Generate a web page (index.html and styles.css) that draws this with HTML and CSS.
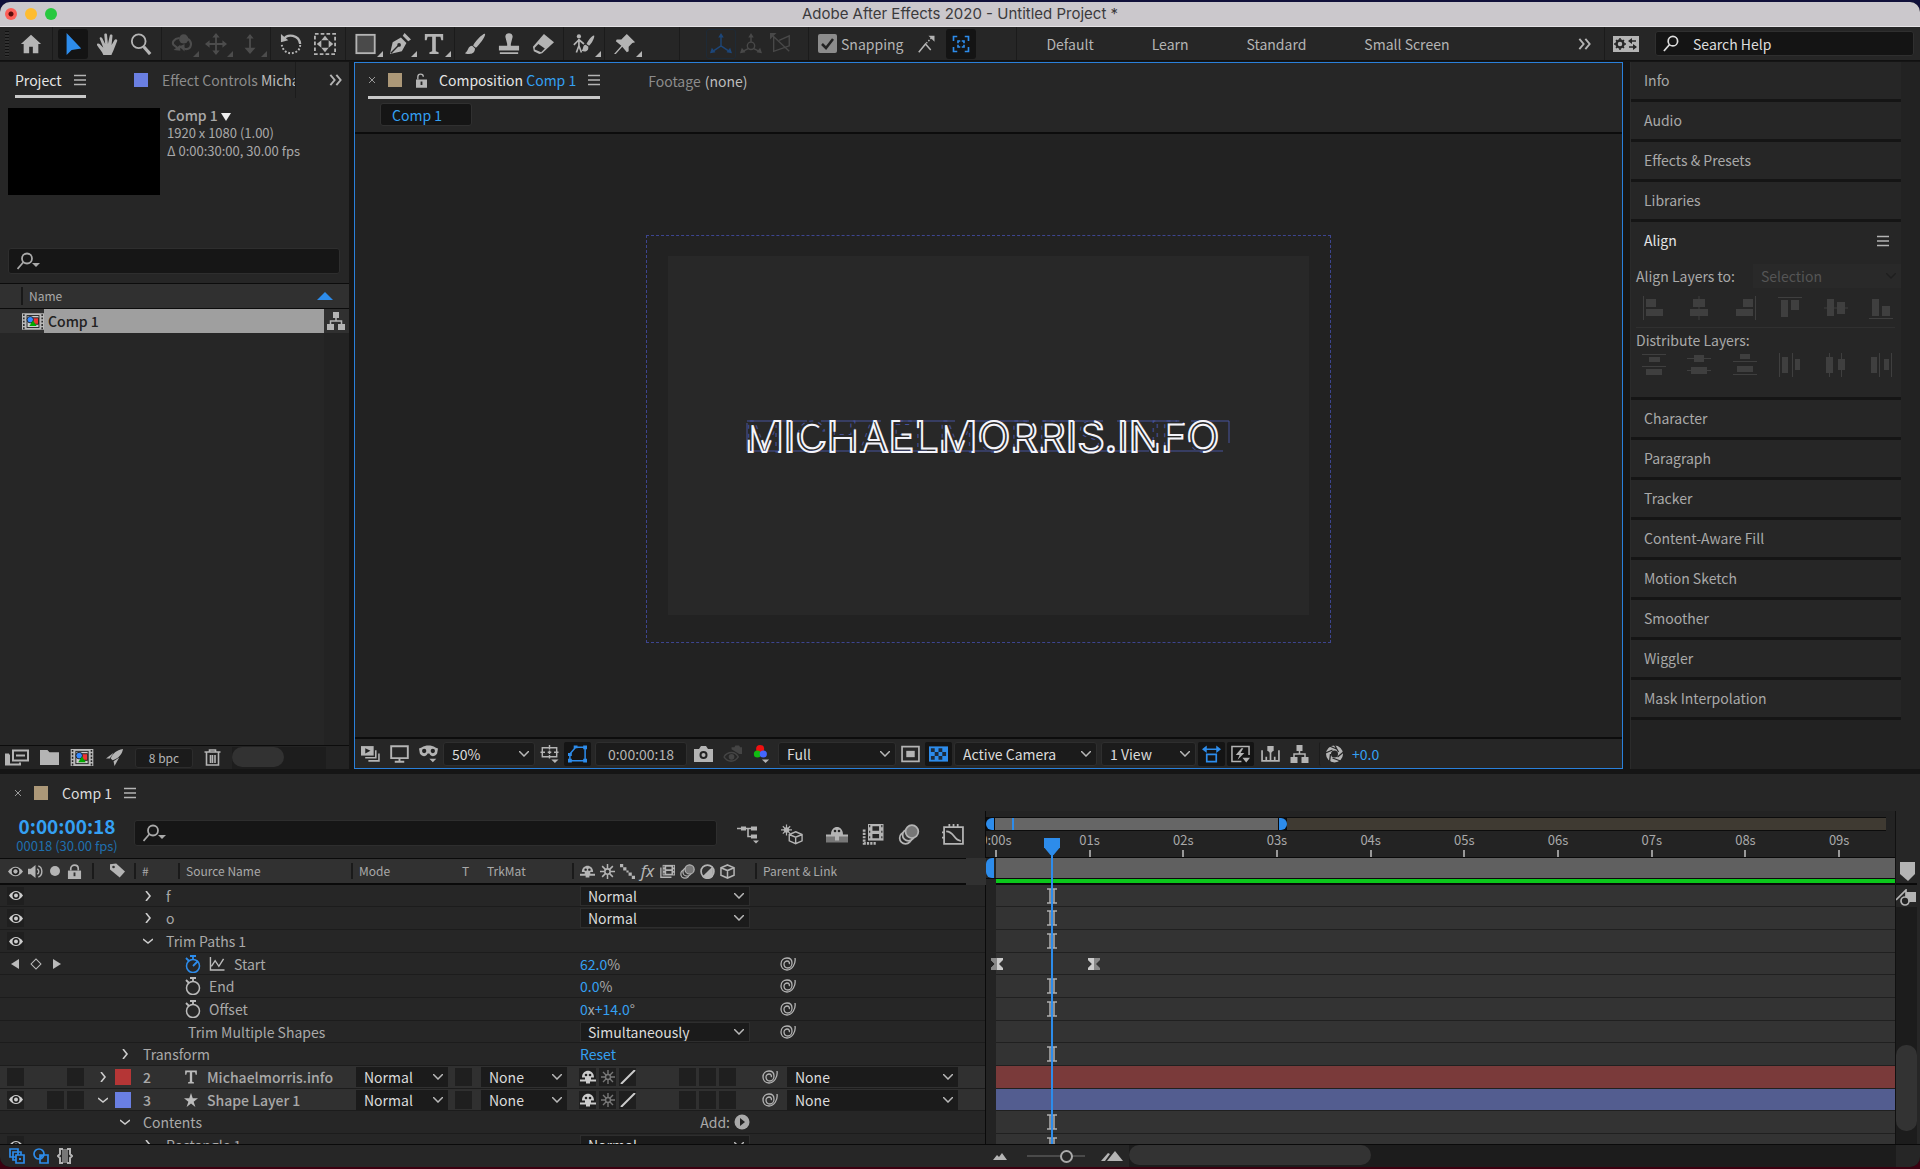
FILE: index.html
```html
<!DOCTYPE html>
<html lang="en">
<head>
<meta charset="utf-8">
<title>Adobe After Effects 2020 - Untitled Project *</title>
<link rel="stylesheet" href="styles.css">
</head>
<body>
<svg class="defs" aria-hidden="true">
  <defs>
    <symbol id="home" viewBox="0 0 24 24"><path fill="currentColor" d="M12 2 1 12h3v10h6v-7h4v7h6V12h3z"/></symbol>
    <symbol id="arrow" viewBox="0 0 24 24"><path fill="currentColor" d="M5 0v24l5.500-5.500L21 17z"/></symbol>
    <symbol id="hand" viewBox="0 0 24 24"><path fill="currentColor" d="M8 24c-1-4-5-7-7-11 0-2 2-2 3-1l4 4L4 6c0-2 2-2 3 0l3 6-1-10c0-2 3-2 3 0l1 10 2-9c0-2 3-2 3 0l-1 10 3-5c1-2 4-1 3 1l-4 10c-1 3-2 3-2 5z"/></symbol>
    <symbol id="mag" viewBox="0 0 24 24"><g fill="none" stroke="currentColor"><circle cx="9.500" cy="9" r="7.500" stroke-width="2"/><path d="m15 15 7 8" stroke-width="3.500"/></g></symbol>
    <symbol id="orbit" viewBox="0 0 26 24"><circle cx="15" cy="6" r="5.500" fill="currentColor"/><path fill="none" stroke="currentColor" stroke-width="2.500" d="M10 5C3 6 1 10 3 13l5 4M20 6c6 4 4 13-3 12l-6-3"/><path fill="currentColor" d="m3 19 8-6v7zM16 12v9l-6-6z"/></symbol>
    <symbol id="pan" viewBox="0 0 24 24"><path fill="currentColor" d="m12 0 4 5h-3v6h6V8l5 4-5 4v-3h-6v6h3l-4 5-4-5h3v-6H5v3l-5-4 5-4v3h6V5H8z"/></symbol>
    <symbol id="dolly" viewBox="0 0 24 24"><path fill="currentColor" d="m12 1 4 5h-3v10h5l-6 7-6-7h5V6H8z"/></symbol>
    <symbol id="rotate" viewBox="0 0 24 24"><path fill="none" stroke="currentColor" stroke-width="2.500" d="M4 7c4-7 17-5 18 5"/><path fill="currentColor" d="M1 1v9l8-2z"/><path fill="none" stroke="currentColor" stroke-width="2.200" stroke-dasharray="2 2" d="M22 13c0 6-5 9-10 9s-9-3-10-9"/></symbol>
    <symbol id="anchor" viewBox="0 0 24 24"><rect x="1" y="1" width="22" height="22" fill="none" stroke="currentColor" stroke-width="2" stroke-dasharray="4 2.300"/><path fill="currentColor" d="m12 3 4 5H8zm0 18 4-5H8zM3 12l5-4v8zm18 0-5-4v8z"/></symbol>
    <symbol id="rectangle" viewBox="0 0 24 24"><rect x="1.500" y="2" width="20" height="20" fill="#4a4a4a" stroke="currentColor" stroke-width="2"/></symbol>
    <symbol id="pen" viewBox="0 0 24 24"><path fill="currentColor" d="m1 23 3-13 9-5 6 6-5 9zM15 3l2-3 7 7-3 2z"/><path stroke="#262626" stroke-width="1.500" d="m2 22 8-8"/><circle cx="11" cy="13" r="2" fill="#262626"/></symbol>
    <symbol id="type" viewBox="0 0 24 24"><path fill="currentColor" d="M2 1h20v7h-2l-1-4h-5v16l3 1v2H7v-2l3-1V4H5L4 8H2z"/></symbol>
    <symbol id="brush" viewBox="0 0 24 24"><path fill="currentColor" d="M23 1c-2-1-12 9-13 13l3 2C16 14 24 3 23 1zM9 14c-5 0-4 6-8 8 5 2 11 1 11-5z"/></symbol>
    <symbol id="stamp" viewBox="0 0 24 24"><path fill="currentColor" d="M10 12 8 4c0-5 8-5 8 0l-2 8v2h9v5H1v-5h9zM2 21h20v2H2z"/></symbol>
    <symbol id="eraser" viewBox="0 0 24 24"><path fill="currentColor" d="M13 1 1 15l1 5 6 3 3-1L24 10z"/><path fill="#262626" d="m7 12 7 5-4 4-7-3v-2z"/></symbol>
    <symbol id="roto" viewBox="0 0 26 24"><circle cx="7" cy="3" r="2.500" fill="currentColor"/><path fill="none" stroke="currentColor" stroke-width="2" d="M7 6v8l-3 8M7 14l3 8M7 7l-6 6M7 7l6 5"/><path fill="currentColor" d="M25 2c-2-1-8 7-9 10l3 2c3-2 7-10 6-12zM15 13c-4 0-2 5-5 7 4 2 9 1 8-5z"/></symbol>
    <symbol id="pin" viewBox="0 0 24 24"><path fill="currentColor" d="m14 1 9 9-3 1-4 4v5l-2 1-5-6-7 8-2 0 8-9-6-5 1-2h5l4-4z"/></symbol>
    <symbol id="axis" viewBox="0 0 24 24"><path fill="none" stroke="currentColor" stroke-width="1.500" d="M12 3v11M12 14 3 20M12 14l9 6"/><path fill="currentColor" d="m12 0 3 5H9zM0 22l2-6 4 5zm24 0-2-6-4 5z"/></symbol>
    <symbol id="axisworld" viewBox="0 0 24 24"><circle cx="12" cy="14" r="4" fill="none" stroke="currentColor" stroke-width="1.500"/><path fill="none" stroke="currentColor" stroke-width="1.500" d="M12 3v7M9 17l-6 3M15 17l6 3"/><path fill="currentColor" d="m12 0 3 5H9zM0 22l2-6 4 5zm24 0-2-6-4 5z"/></symbol>
    <symbol id="axisview" viewBox="0 0 24 24"><path fill="none" stroke="currentColor" stroke-width="1.500" d="M4 4v16L21 14V3L10 8M3 3l18 17"/><path fill="currentColor" d="M0 0h7L0 7z"/></symbol>
    <symbol id="snapline" viewBox="0 0 24 24"><path fill="none" stroke="currentColor" stroke-width="2" d="m1 23 9-11 7 8"/><path fill="none" stroke="currentColor" stroke-width="2" stroke-dasharray="2 2" d="m11 11 7-7"/><path fill="currentColor" d="M14 1h8v8z"/></symbol>
    <symbol id="snapbox" viewBox="0 0 24 24"><g fill="none" stroke="currentColor" stroke-width="2.200"><path d="M2 8V2h5M17 2h5v6M22 16v6h-5M7 22H2v-6M8 11V8h3M13 8h3v3M16 13v3h-3M11 16H8v-3"/></g></symbol>
    <symbol id="chevrons" viewBox="0 0 16 14"><path fill="none" stroke="currentColor" stroke-width="2.200" d="m2 1 5 6-5 6M9 1l5 6-5 6"/></symbol>
    <symbol id="workspace" viewBox="0 0 26 16"><path fill="currentColor" d="M0 0h26v16H0z"/><circle cx="7" cy="8" r="3.500" fill="none" stroke="#262626" stroke-width="2.500"/><path stroke="#262626" stroke-width="1.500" d="M7 2v3M7 11v3M1 8h3M10 8h3M3 4l2 2M9 10l2 2M3 12l2-2M9 6l2-2M16 5h7M16 11h7"/><path fill="#262626" d="m15 5 4-3v6zM24 11l-4-3v6z"/></symbol>
    <symbol id="menu" viewBox="0 0 12 12"><path stroke="currentColor" stroke-width="1.500" d="M0 1.500h12M0 6h12M0 10.500h12"/></symbol>
    <symbol id="lens" viewBox="0 0 16 18"><g fill="none" stroke="currentColor" stroke-width="1.800"><circle cx="10" cy="6.500" r="5"/><path d="m6.500 10-6 7"/></g></symbol>
    <symbol id="lensdrop" viewBox="0 0 24 18"><g fill="none" stroke="currentColor" stroke-width="1.800"><circle cx="10" cy="6.500" r="5"/><path d="m6.500 10-6 7"/></g><path fill="currentColor" d="M15 11h8l-4 4z"/></symbol>
    <symbol id="unlock" viewBox="0 0 12 16"><path fill="none" stroke="currentColor" stroke-width="1.500" d="M2 7V4c0-4 6-4 6 0"/><path fill="currentColor" d="M0 7h12v9H0z"/><path fill="#262626" d="M5 9h2v4H5z"/></symbol>
    <symbol id="lock" viewBox="0 0 14 16"><path fill="none" stroke="currentColor" stroke-width="1.800" d="M3 7V5c0-5 8-5 8 0v2"/><path fill="currentColor" d="M0 7h14v9H0z"/><path fill="#333" d="M6 9h2v4H6z"/></symbol>
    <symbol id="compicon" viewBox="0 0 24 18"><path fill="#b9b9b9" d="M0 0h24v18H0z"/><path fill="#222" d="M5 2h14v14H5z"/><path fill="#ccc" d="M6 3h12v12H6z"/><path fill="#e33" stroke="#222" d="M11 5h7v7h-7z"/><circle cx="9" cy="7" r="3.500" fill="#38f" stroke="#222"/><path fill="#0a0" d="m12 8 4 6H8z"/><path stroke="#222" stroke-width="1.600" stroke-dasharray="2 1.600" d="M2 1v17M22 1v17"/></symbol>
    <symbol id="flow" viewBox="0 0 18 18"><path fill="currentColor" d="M6 0h6v6H6zM0 12h7v6H0zM11 12h7v6h-7z"/><path fill="none" stroke="currentColor" stroke-width="1.500" d="M9 6v3M3.500 12V9h11v3"/></symbol>
    <symbol id="interpret" viewBox="0 0 24 16"><path fill="none" stroke="currentColor" stroke-width="2" d="M8 1h15v10H8zM11 6h9M4 5H1v10h14v-2"/><path fill="currentColor" d="M2 5h3v10H2z"/></symbol>
    <symbol id="folder" viewBox="0 0 18 14"><path fill="currentColor" d="M0 0h7l2 2h9v12H0z"/></symbol>
    <symbol id="rocket" viewBox="0 0 18 18"><path fill="currentColor" d="M18 0C11 1 7 5 5 10l2 2c6-2 10-6 11-12zM8 4 0 10l4 0zM14 9l-5 9-1-5z"/></symbol>
    <symbol id="trash" viewBox="0 0 16 17"><path fill="none" stroke="currentColor" stroke-width="1.600" d="M0 3h16M5 3V1h6v2M2 3v13h12V3M6 6v8M8 6v8M10.500 6v8"/></symbol>
    <symbol id="preview" viewBox="0 0 18 15"><path fill="currentColor" d="M0 0h12v9H0z"/><path fill="#222" d="m4 2 5 2.500L4 7z"/><path fill="none" stroke="currentColor" stroke-width="1.500" d="M14 4v7H4M17 7v7H7"/></symbol>
    <symbol id="monitor" viewBox="0 0 16 15"><path fill="none" stroke="currentColor" stroke-width="1.600" d="M1 1h14v10H1zM8 11v3M4 14h8"/></symbol>
    <symbol id="goggles" viewBox="0 0 22 19"><path fill="currentColor" d="M3 2c5-3 11-3 16 0l3 1-1 6c-3 4-7 4-9 0h-2c-2 4-6 4-9 0L0 3zM12 15h8l-4 4z"/><circle cx="6" cy="6" r="2.500" fill="#222"/><circle cx="16" cy="6" r="2.500" fill="#222"/></symbol>
    <symbol id="grid" viewBox="0 0 20 20"><path fill="none" stroke="currentColor" stroke-width="1.600" d="M2 3h16v10H2zM10 0v5M10 11v4M0 8h5M15 8h5M8 8h4M10 6v4"/><path fill="currentColor" d="M12 16h8l-4 4z"/></symbol>
    <symbol id="mask" viewBox="0 0 20 18"><path fill="none" stroke="currentColor" stroke-width="1.600" d="M2 16V9l6-7h10v14z"/><path fill="currentColor" d="M0 14h4v4H0zM16 14h4v4h-4zM16 0h4v4h-4zM6 0h4v3H6zM0 8h4v3H0z"/></symbol>
    <symbol id="camera" viewBox="0 0 19 16"><path fill="currentColor" d="M0 3h5l2-3h5l2 3h5v13H0z"/><circle cx="9.500" cy="9" r="4" fill="#222"/><circle cx="9.500" cy="9" r="2" fill="currentColor"/></symbol>
    <symbol id="showsnap" viewBox="0 0 20 18"><path fill="none" stroke="currentColor" stroke-width="1.600" d="M1 12c4-6 12-6 15 0-4 6-11 6-15 0"/><circle cx="9" cy="12" r="3" fill="currentColor"/><path fill="currentColor" d="M9 4V2h3l1-2h4l1 2h2v7h-3z"/></symbol>
    <symbol id="rgb" viewBox="0 0 17 20"><circle cx="7" cy="4.500" r="4.500" fill="#f01010"/><circle cx="4" cy="10" r="4" fill="#1b1"/><circle cx="10.500" cy="10" r="4" fill="#46f"/><path fill="currentColor" d="M9 16h8l-4 4z"/></symbol>
    <symbol id="roi" viewBox="0 0 18 16"><path fill="none" stroke="currentColor" stroke-width="1.600" d="M1 1h16v14H1z"/><path fill="currentColor" d="M5 5h8v6H5z"/></symbol>
    <symbol id="checker" viewBox="0 0 20 16"><path fill="currentColor" d="M0 0h20v16H0z"/><path fill="#1c2b3c" d="M2 2h4v4H2zM10 2h4v4h-4zM6 6h4v4H6zM14 6h4v4h-4zM2 10h4v4H2zM10 10h4v4h-4z"/></symbol>
    <symbol id="pixelaspect" viewBox="0 0 20 18"><path fill="none" stroke="currentColor" stroke-width="1.800" d="M5 9.500h10V17H5zM2 4h16"/><path fill="currentColor" d="m0 4 5-4v8zM20 4l-5-4v8z"/></symbol>
    <symbol id="fast" viewBox="0 0 20 18"><path fill="none" stroke="currentColor" stroke-width="1.600" d="M19 10V1H1v16h10"/><path fill="currentColor" d="m11 3-6 7h4l-2 5 7-7h-4l3-5zM12 13h8l-4 5z"/></symbol>
    <symbol id="tlbtn" viewBox="0 0 18 15"><path fill="none" stroke="currentColor" stroke-width="1.600" d="M1 4v10h16V4M5 10v4M9 6v8M13 10v4"/><path fill="currentColor" d="M6 0h6v4l-3 3-3-3z"/></symbol>
    <symbol id="aperture" viewBox="0 0 18 18"><circle cx="9" cy="9" r="6" fill="none" stroke="currentColor" stroke-width="5"/><path fill="none" stroke="#262626" stroke-width="1.300" d="m9 0 4 7M18 7l-6 5M15 16l-8-3M4 17l1-8M0 8l7-3M4 1l7 3"/></symbol>
    <symbol id="eye" viewBox="0 0 14 10"><path fill="currentColor" d="M0 5c4-6 10-6 14 0-4 6-10 6-14 0z"/><circle cx="7" cy="5" r="3.500" fill="#1c1c1c"/><circle cx="7" cy="5" r="2" fill="currentColor"/></symbol>
    <symbol id="speaker" viewBox="0 0 16 14"><path fill="currentColor" d="M0 4h3l5-4v14l-5-4H0z"/><path fill="none" stroke="currentColor" stroke-width="1.500" d="M10 4c2 2 2 4 0 6M11 1c5 2 5 10 0 12"/></symbol>
    <symbol id="tag" viewBox="0 0 17 16"><path fill="currentColor" d="M0 1 7 0l10 9-6 7L0 7z"/><circle cx="4" cy="4" r="1.500" fill="#333"/></symbol>
    <symbol id="shy" viewBox="0 0 16 13"><path fill="currentColor" d="M2 7c0-9 12-9 12 0h-3v2h5v2h-6v2H6v-2H0V9h5V7z"/><circle cx="6" cy="4.500" r="1.300" fill="#222"/><circle cx="10" cy="4.500" r="1.300" fill="#222"/></symbol>
    <symbol id="sun" viewBox="0 0 14 14"><circle cx="7" cy="7" r="2.500" fill="none" stroke="currentColor" stroke-width="1.500"/><path stroke="currentColor" stroke-width="1.400" d="M7 0v4M7 10v4M0 7h4M10 7h4M2 2l3 3M9 9l3 3M12 2 9 5M5 9l-3 3"/></symbol>
    <symbol id="dots" viewBox="0 0 14 14"><path fill="currentColor" d="M0 0h3v3H0zM3 3h3v3H3zM6 6h2v2H6zM8 8h3v3H8zM11 11h3v3h-3z"/></symbol>
    <symbol id="slash" viewBox="0 0 14 14"><path fill="none" stroke="currentColor" stroke-width="2" d="M0 14 14 0"/></symbol>
    <symbol id="film" viewBox="0 0 17 15"><path fill="none" stroke="currentColor" stroke-width="1.500" d="M1 3v11h12"/><path fill="currentColor" d="M3 0h14v12H3z"/><path fill="#333" d="M7 2h6v3H7zM7 7h6v3H7zM4 1h1v2H4zM4 5h1v2H4zM4 9h1v2H4zM15 1h1v2h-1zM15 5h1v2h-1zM15 9h1v2h-1z"/></symbol>
    <symbol id="blur" viewBox="0 0 18 18"><g fill="none" stroke="currentColor" stroke-width="1.500"><circle cx="6" cy="12" r="5"/><circle cx="8.500" cy="9.500" r="5" fill="#333"/><circle cx="11.500" cy="6.500" r="5.500" fill="#777"/></g></symbol>
    <symbol id="adjust" viewBox="0 0 14 14"><circle cx="7" cy="7" r="6" fill="none" stroke="currentColor" stroke-width="1.600"/><path fill="currentColor" d="M12 2v10A7 7 0 0 1 2 12z"/></symbol>
    <symbol id="cube" viewBox="0 0 16 16"><path fill="none" stroke="currentColor" stroke-width="1.600" d="m8 1 7 3v8l-7 3-7-3V4zM1 4l7 3 7-3M8 7v8"/></symbol>
    <symbol id="flowchart" viewBox="0 0 22 18"><path fill="none" stroke="currentColor" stroke-width="1.600" d="M0 3h20M11 3v8h8"/><path fill="currentColor" d="M4 1h5v4H4zM14 1h6v4h-6zM14 9h6v4h-6zM16 15h6l-3 3z"/></symbol>
    <symbol id="draft" viewBox="0 0 24 22"><path fill="none" stroke="currentColor" stroke-width="1.500" d="m16 8 7 3v7l-7 3-7-3v-7zM9 11l7 3 7-3M16 14v7"/><path stroke="currentColor" stroke-width="1.300" d="M6 0v12M0 6h12M2 2l8 8M10 2l-8 8"/><circle cx="6" cy="6" r="3" fill="currentColor"/></symbol>
    <symbol id="shyall" viewBox="0 0 22 16"><path fill="#777" d="M0 9h22v7H0z"/><path fill="currentColor" d="M5 8c0-10 12-10 12 0h5v2h-9v4H9v-4H0V8z"/><circle cx="9" cy="4.500" r="1.300" fill="#262626"/><circle cx="13" cy="4.500" r="1.300" fill="#262626"/></symbol>
    <symbol id="films" viewBox="0 0 19 19"><path fill="none" stroke="currentColor" stroke-width="2.500" stroke-dasharray="2 1" d="M1.500 5v12.500H13"/><path fill="currentColor" d="M5 0h14v15H5z"/><path fill="#262626" d="M9 2h6v4H9zM9 9h6v4H9zM6 1h1v2H6zM6 6h1v2H6zM6 11h1v2H6zM17 1h1v2h-1zM17 6h1v2h-1zM17 11h1v2h-1z"/></symbol>
    <symbol id="graph" viewBox="0 0 21 20"><path fill="none" stroke="currentColor" stroke-width="1.700" d="M2 3h18v16H2zM4 7c8 0 7 9 14 9M7 0v3M11 0v3M15 0v3M0 8h2M0 13h2"/></symbol>
    <symbol id="twirl" viewBox="0 0 10 10"><path fill="none" stroke="currentColor" stroke-width="1.600" d="m3 0 4 5-4 5"/></symbol>
    <symbol id="twirldown" viewBox="0 0 10 10"><path fill="none" stroke="currentColor" stroke-width="1.600" d="m0 3 5 4 5-4"/></symbol>
    <symbol id="watch" viewBox="0 0 16 18"><circle cx="8" cy="11" r="6.500" fill="none" stroke="currentColor" stroke-width="1.500"/><path fill="none" stroke="currentColor" stroke-width="1.800" d="M5 1h6M8 1v3M1 3l3 3"/></symbol>
    <symbol id="watchon" viewBox="0 0 16 18"><circle cx="8" cy="11" r="6.500" fill="none" stroke="currentColor" stroke-width="1.500"/><path fill="none" stroke="currentColor" stroke-width="1.800" d="M5 1h6M8 1v3M1 3l3 3M8 11l5-5"/></symbol>
    <symbol id="curve" viewBox="0 0 16 16"><path fill="none" stroke="currentColor" stroke-width="1.500" d="M1 1v14h15M2 11l4-6 4 6 5-8"/></symbol>
    <symbol id="star" viewBox="0 0 16 16"><path fill="currentColor" d="m8 0 2 6h6l-5 4 2 6-5-4-5 4 2-6-5-4h6z"/></symbol>
    <symbol id="whip" viewBox="0 0 16 14"><path fill="none" stroke="currentColor" stroke-width="1.300" d="M15 1c1 6-3 12-8 12C3 13 1 10 1 7c0-4 3-6 6-6 4 0 5 3 5 5 0 3-2 5-4 5-3 0-4-2-4-4s2-3 3-3c2 0 3 2 2 3"/></symbol>
    <symbol id="ibeam" viewBox="0 0 10 16"><path fill="none" stroke="#b0b0b0" stroke-width="1.500" d="M0 1h10M0 15h10M3 1v14M7 1v14"/></symbol>
    <symbol id="keyl" viewBox="0 0 12 12"><path fill="#ccc" d="M0 0h12v2L8 6l4 4v2H0v-2l4-4-4-4z"/><path fill="#888" d="M0 0h6v12H0v-2l4-4-4-4z"/></symbol>
    <symbol id="keyr" viewBox="0 0 12 12"><path fill="#888" d="M0 0h12v2L8 6l4 4v2H0v-2l4-4-4-4z"/><path fill="#ccc" d="M0 0h6v12H0v-2l4-4-4-4z"/></symbol>
    <symbol id="add" viewBox="0 0 16 16"><circle cx="8" cy="8" r="7.500" fill="currentColor"/><path fill="#222" d="m6 4 5 4-5 4z"/></symbol>
    <symbol id="sw1" viewBox="0 0 16 16"><path fill="none" stroke="currentColor" stroke-width="1.700" d="M1 1h8v8H1zM4 4h8v8H4z"/><path fill="#262626" stroke="currentColor" stroke-width="1.700" d="M7 7h8v8H7z"/><path fill="currentColor" d="M10 10h2v2h-2z"/></symbol>
    <symbol id="sw2" viewBox="0 0 16 16"><circle cx="6" cy="6" r="5" fill="none" stroke="currentColor" stroke-width="1.700"/><path fill="none" stroke="currentColor" stroke-width="1.700" d="M7 7h8v8H7z"/><path fill="currentColor" d="M7 7h4l-4 4z"/></symbol>
    <symbol id="sw3" viewBox="0 0 16 16"><path fill="#777" d="M5 1h6v14H5z"/><path fill="none" stroke="currentColor" stroke-width="2" d="M6 1H3v5L1 8l2 2v5h3M10 1h3v5l2 2-2 2v5h-3"/></symbol>
    <symbol id="hillS" viewBox="0 0 14 7"><path fill="currentColor" d="m0 7 4-5 2 2 3-4 5 7z"/></symbol>
    <symbol id="hillL" viewBox="0 0 22 10"><path fill="currentColor" d="m0 10 7-8 2 1-5 7zM6 10l8-10 8 10z"/></symbol>
    <symbol id="marker" viewBox="0 0 15 19"><path fill="currentColor" d="M0 0h15v12l-7 7-8-7z"/></symbol>
    <symbol id="compbtn" viewBox="0 0 20 17"><path fill="currentColor" d="M10 3h10v10H10z"/><path fill="none" stroke="currentColor" stroke-width="1.700" d="m0 11 10-10v8"/><circle cx="9" cy="12" r="4" fill="#222" stroke="currentColor" stroke-width="1.700"/></symbol>
    <symbol id="al1" viewBox="0 0 24 24"><path fill="currentColor" d="M1 0h1v24H1zM4 3h10v8H4zM4 13h17v7H4z"/></symbol>
    <symbol id="al2" viewBox="0 0 24 24"><path fill="currentColor" d="M11.500 0h1v24h-1zM6 3h12v8H6zM3 13h18v7H3z"/></symbol>
    <symbol id="al3" viewBox="0 0 24 24"><path fill="currentColor" d="M22 0h1v24h-1zM10 3h10v8H10zM3 13h17v7H3z"/></symbol>
    <symbol id="al4" viewBox="0 0 24 24"><path fill="currentColor" d="M0 1h24v1H0zM3 4h7v17H3zM13 4h8v10h-8z"/></symbol>
    <symbol id="al5" viewBox="0 0 24 24"><path fill="currentColor" d="M0 11.500h24v1H0zM3 3h7v17H3zM13 6h8v12h-8z"/></symbol>
    <symbol id="al6" viewBox="0 0 24 24"><path fill="currentColor" d="M0 22h24v1H0zM3 3h7v17H3zM13 10h8v10h-8z"/></symbol>
    <symbol id="di1" viewBox="0 0 24 24"><path fill="currentColor" d="M0 1h24v1H0zM7 4h11v5H7zM0 13h24v1H0zM4 16h16v6H4z"/></symbol>
    <symbol id="di2" viewBox="0 0 24 24"><path fill="currentColor" d="M0 5h24v1H0zM7 2h10v7H7zM0 17h24v1H0zM4 14h16v7H4z"/></symbol>
    <symbol id="di3" viewBox="0 0 24 24"><path fill="currentColor" d="M0 8h24v1H0zM7 1h10v5H7zM0 21h24v1H0zM4 13h16v6H4z"/></symbol>
    <symbol id="di4" viewBox="0 0 24 24"><path fill="currentColor" d="M1 0h1v24H1zM4 4h6v16H4zM14 0h1v24h-1zM17 6h5v11h-5z"/></symbol>
    <symbol id="di5" viewBox="0 0 24 24"><path fill="currentColor" d="M5 0h1v24H5zM2 4h7v16H2zM17 0h1v24h-1zM14 6h7v11h-7z"/></symbol>
    <symbol id="di6" viewBox="0 0 24 24"><path fill="currentColor" d="M2 4h6v16H2zM10 0h1v24h-1zM15 6h5v11h-5zM22 0h1v24h-1z"/></symbol>
  </defs>
</svg>

<div class="window">
  <header class="titlebar">
    <span class="light red"></span><span class="light yellow"></span><span class="light green"></span>
    <h1>Adobe After Effects 2020 - Untitled Project *</h1>
  </header>

  <nav class="toolbar" aria-label="Tools">
    <div class="group first"><span class="grip"></span><button class="tool" aria-label="Home"><svg><use href="#home"/></svg></button></div>
    <div class="group"><button class="tool on" aria-label="Selection"><svg><use href="#arrow"/></svg></button><button class="tool" aria-label="Hand"><svg><use href="#hand"/></svg></button><button class="tool" aria-label="Zoom"><svg><use href="#mag"/></svg></button></div>
    <div class="group dim"><button class="tool more" aria-label="Orbit"><svg><use href="#orbit"/></svg></button><button class="tool more" aria-label="Pan camera"><svg><use href="#pan"/></svg></button><button class="tool more" aria-label="Dolly"><svg><use href="#dolly"/></svg></button></div>
    <div class="group"><button class="tool" aria-label="Rotation"><svg><use href="#rotate"/></svg></button><button class="tool" aria-label="Anchor point"><svg><use href="#anchor"/></svg></button></div>
    <div class="group"><button class="tool more" aria-label="Rectangle"><svg><use href="#rectangle"/></svg></button><button class="tool more" aria-label="Pen"><svg><use href="#pen"/></svg></button><button class="tool more" aria-label="Type"><svg><use href="#type"/></svg></button></div>
    <div class="group"><button class="tool" aria-label="Brush"><svg><use href="#brush"/></svg></button><button class="tool" aria-label="Clone stamp"><svg><use href="#stamp"/></svg></button><button class="tool" aria-label="Eraser"><svg><use href="#eraser"/></svg></button></div>
    <div class="group"><button class="tool more" aria-label="Roto brush"><svg><use href="#roto"/></svg></button></div>
    <div class="group pins"><button class="tool more" aria-label="Puppet pin"><svg><use href="#pin"/></svg></button></div>
    <div class="group axes"><button class="tool framed" aria-label="Local axis"><svg><use href="#axis"/></svg></button><button class="tool" aria-label="World axis"><svg><use href="#axisworld"/></svg></button><button class="tool" aria-label="View axis"><svg><use href="#axisview"/></svg></button></div>
    <div class="group snaps">
      <label class="snap"><input type="checkbox" checked>Snapping</label>
      <button class="tool" aria-label="Snap beyond edges"><svg><use href="#snapline"/></svg></button><button class="tool on" aria-label="Snap to features"><svg><use href="#snapbox"/></svg></button>
    </div>
    <div class="group spaces"><button>Default</button><button>Learn</button><button>Standard</button><button>Small Screen</button></div>
    <button class="overflow" aria-label="More workspaces"><svg class="i16"><use href="#chevrons"/></svg></button>
    <div class="group help">
      <button aria-label="Workspace settings"><svg class="wsicon"><use href="#workspace"/></svg></button>
      <label class="helpbox"><svg class="lens"><use href="#lens"/></svg><input type="text" aria-label="Search Help" value="Search Help"></label>
    </div>
  </nav>

  <main class="upper">
    <section class="project">
      <div class="tabs">
        <button class="tab active">Project <svg class="menu"><use href="#menu"/></svg></button>
        <button class="tab fx"><i class="swatch blue"></i><span class="clip">Effect Controls <b>Michaelmorris.info</b></span></button>
        <button class="overflow" aria-label="More panels"><svg class="i16"><use href="#chevrons"/></svg></button>
      </div>
      <div class="meta">
        <div class="thumb"></div>
        <div class="facts"><strong>Comp 1<i class="tri"></i></strong><span>1920 x 1080 (1.00)</span><span>Δ 0:00:30:00, 30.00 fps</span></div>
      </div>
      <label class="searchbox"><svg class="lensdrop"><use href="#lensdrop"/></svg><input type="text" aria-label="Search project"></label>
      <div class="colhead"><span>Name</span><i class="sort"></i></div>
      <div class="item"><svg class="compicon"><use href="#compicon"/></svg><span class="itemname">Comp 1</span><svg class="flow"><use href="#flow"/></svg></div>
      <div class="projbody"><div></div></div>
      <div class="projfoot">
        <button aria-label="Interpret footage"><svg class="w24"><use href="#interpret"/></svg></button>
        <button aria-label="New folder"><svg class="w20"><use href="#folder"/></svg></button>
        <button aria-label="New composition"><svg class="w24"><use href="#compicon"/></svg></button>
        <button aria-label="Project settings"><svg class="w20"><use href="#rocket"/></svg></button>
        <button class="bpc">8 bpc</button>
        <button aria-label="Delete"><svg class="w18"><use href="#trash"/></svg></button>
        <div class="hscroll"><i></i></div>
      </div>
    </section>

    <section class="comp">
      <div class="comptabs">
        <button class="tab active"><svg class="x" viewBox="0 0 8 8"><path d="m1 1 6 6M7 1 1 7"/></svg><i class="swatch tan"></i><svg class="unlock"><use href="#unlock"/></svg><span>Composition <em>Comp 1</em></span><svg class="menu"><use href="#menu"/></svg></button>
        <button class="tab footage">Footage <b>(none)</b></button>
      </div>
      <div class="crumbs"><button>Comp 1</button></div>
      <div class="viewer">
        <div class="bounds"><div class="canvas">
          <svg class="logo" viewBox="0 0 486 34">
            <rect x="2" y="2" width="482" height="30" class="logobox"/>
            <text x="0" y="33" class="ghost">MICHAELMORRIS.INFO</text>
            <text x="0" y="33" class="stroke">MICHAELMORRIS.INFO</text>
          </svg>
        </div></div>
      </div>
      <div class="viewbar">
        <button class="vi" aria-label="Always preview"><svg><use href="#preview"/></svg></button>
        <button class="vi" aria-label="Primary viewer"><svg><use href="#monitor"/></svg></button>
        <button class="vi" aria-label="VR"><svg><use href="#goggles"/></svg></button>
        <select class="zoomsel" aria-label="Magnification"><option>50%</option></select>
        <button class="vi" aria-label="Grid and guides"><svg><use href="#grid"/></svg></button>
        <button class="vi on" aria-label="Mask visibility"><svg><use href="#mask"/></svg></button>
        <button class="time">0:00:00:18</button>
        <button class="vi" aria-label="Snapshot"><svg><use href="#camera"/></svg></button>
        <button class="vi off" aria-label="Show snapshot"><svg><use href="#showsnap"/></svg></button>
        <button class="vi" aria-label="Channels"><svg><use href="#rgb"/></svg></button>
        <select class="ressel" aria-label="Resolution"><option>Full</option></select>
        <button class="vi" aria-label="Region of interest"><svg><use href="#roi"/></svg></button>
        <button class="vi on" aria-label="Transparency grid"><svg><use href="#checker"/></svg></button>
        <select class="camsel" aria-label="3D view"><option>Active Camera</option></select>
        <select class="viewsel" aria-label="View layout"><option>1 View</option></select>
        <button class="vi on" aria-label="Pixel aspect"><svg><use href="#pixelaspect"/></svg></button>
        <button class="vi dark" aria-label="Fast previews"><svg><use href="#fast"/></svg></button>
        <button class="vi" aria-label="Timeline"><svg><use href="#tlbtn"/></svg></button>
        <button class="vi" aria-label="Flowchart"><svg><use href="#flow"/></svg></button>
        <button class="vi sep" aria-label="Exposure"><svg><use href="#aperture"/></svg></button>
        <a href="#" class="expo">+0.0</a>
      </div>
    </section>

    <aside class="side">
      <button class="panel">Info</button>
      <button class="panel">Audio</button>
      <button class="panel">Effects &amp; Presets</button>
      <button class="panel">Libraries</button>
      <section class="align">
        <div class="panel head"><span>Align</span><svg class="menu"><use href="#menu"/></svg></div>
        <div class="alignto"><label for="alignto">Align Layers to:</label><select id="alignto" disabled><option>Selection</option></select></div>
        <div class="aicons">
          <button aria-label="Align left"><svg><use href="#al1"/></svg></button><button aria-label="Align center"><svg><use href="#al2"/></svg></button><button aria-label="Align right"><svg><use href="#al3"/></svg></button><button aria-label="Align top"><svg><use href="#al4"/></svg></button><button aria-label="Align middle"><svg><use href="#al5"/></svg></button><button aria-label="Align bottom"><svg><use href="#al6"/></svg></button>
        </div>
        <div class="dist">Distribute Layers:</div>
        <div class="aicons">
          <button aria-label="Distribute top"><svg><use href="#di1"/></svg></button><button aria-label="Distribute middle"><svg><use href="#di2"/></svg></button><button aria-label="Distribute bottom"><svg><use href="#di3"/></svg></button><button aria-label="Distribute left"><svg><use href="#di4"/></svg></button><button aria-label="Distribute center"><svg><use href="#di5"/></svg></button><button aria-label="Distribute right"><svg><use href="#di6"/></svg></button>
        </div>
      </section>
      <button class="panel">Character</button>
      <button class="panel">Paragraph</button>
      <button class="panel">Tracker</button>
      <button class="panel">Content-Aware Fill</button>
      <button class="panel">Motion Sketch</button>
      <button class="panel">Smoother</button>
      <button class="panel">Wiggler</button>
      <button class="panel">Mask Interpolation</button>
    </aside>
  </main>

  <section class="timeline">
    <div class="tltab"><svg class="x" viewBox="0 0 8 8"><path d="m1 1 6 6M7 1 1 7"/></svg><i class="swatch tan"></i><span>Comp 1</span><svg class="menu"><use href="#menu"/></svg></div>
    <div class="tlmain">
      <div class="layers">
        <div class="tltools">
          <div class="clock"><a href="#">0:00:00:18</a><small>00018 (30.00 fps)</small></div>
          <label class="searchbox"><svg class="lensdrop"><use href="#lensdrop"/></svg><input type="text" aria-label="Search layers"></label>
          <div class="tlicons">
            <button aria-label="Mini-flowchart"><svg><use href="#flowchart"/></svg></button><button aria-label="Draft 3D"><svg><use href="#draft"/></svg></button>
            <div class="trio"><button aria-label="Hide shy layers"><svg><use href="#shyall"/></svg></button><button aria-label="Frame blending"><svg><use href="#films"/></svg></button><button aria-label="Motion blur"><svg><use href="#blur"/></svg></button></div>
            <button aria-label="Graph editor"><svg><use href="#graph"/></svg></button>
          </div>
        </div>
        <div class="lhead">
          <span class="avh"><svg><use href="#eye"/></svg><svg><use href="#speaker"/></svg><i class="solo"></i><svg><use href="#lock"/></svg></span>
          <span class="tagh"><svg><use href="#tag"/></svg></span><span>#</span><span>Source Name</span><span>Mode</span><span class="nobar">T</span><span class="nobar">TrkMat</span>
          <span class="swh"><svg><use href="#shy"/></svg><svg><use href="#sun"/></svg><svg><use href="#dots"/></svg><i class="fx">fx</i><svg><use href="#film"/></svg><svg><use href="#blur"/></svg><svg><use href="#adjust"/></svg><svg><use href="#cube"/></svg></span>
          <span>Parent &amp; Link</span>
        </div>
        <div class="rows">
          <div class="row"><div class="av"><i class="box"><svg><use href="#eye"/></svg></i></div><div class="name in3"><svg class="tw"><use href="#twirl"/></svg>f</div><div class="val"><select aria-label="Blend mode f"><option>Normal</option></select></div></div>
          <div class="row"><div class="av"><i class="box"><svg><use href="#eye"/></svg></i></div><div class="name in3"><svg class="tw"><use href="#twirl"/></svg>o</div><div class="val"><select aria-label="Blend mode o"><option>Normal</option></select></div></div>
          <div class="row"><div class="av"><i class="box"><svg><use href="#eye"/></svg></i></div><div class="name in3"><svg class="tw"><use href="#twirldown"/></svg>Trim Paths 1</div></div>
          <div class="row"><div class="av keys"><i class="prev"></i><i class="dia"></i><i class="next"></i></div><div class="name in4"><svg class="watch on"><use href="#watchon"/></svg><svg class="curve"><use href="#curve"/></svg>Start</div><div class="val"><a href="#">62.0</a>%</div><div class="link"><svg><use href="#whip"/></svg></div></div>
          <div class="row"><div class="av"></div><div class="name in4"><svg class="watch"><use href="#watch"/></svg>End</div><div class="val"><a href="#">0.0</a>%</div><div class="link"><svg><use href="#whip"/></svg></div></div>
          <div class="row"><div class="av"></div><div class="name in4"><svg class="watch"><use href="#watch"/></svg>Offset</div><div class="val"><a href="#">0</a>x<a href="#">+14.0</a>°</div><div class="link"><svg><use href="#whip"/></svg></div></div>
          <div class="row"><div class="av"></div><div class="name in5">Trim Multiple Shapes</div><div class="val"><select aria-label="Trim multiple shapes"><option>Simultaneously</option></select></div><div class="link"><svg><use href="#whip"/></svg></div></div>
          <div class="row"><div class="av"></div><div class="name in2"><svg class="tw"><use href="#twirl"/></svg>Transform</div><div class="val"><a href="#">Reset</a></div></div>
          <div class="row layer"><div class="av"><i class="box"></i><i class="gap"></i><i class="gap"></i><i class="box"></i></div><div class="lab"><svg class="tw"><use href="#twirl"/></svg><i class="chip red"></i></div><b class="num">2</b><div class="src"><svg><use href="#type"/></svg><b>Michaelmorris.info</b></div><select class="mode" aria-label="Mode 2"><option>Normal</option></select><i class="box"></i><select class="trk" aria-label="Track matte 2"><option>None</option></select><div class="sw"><i class="box"><svg><use href="#shy"/></svg></i><i class="box faint"><svg><use href="#sun"/></svg></i><i class="box slash"><svg><use href="#slash"/></svg></i><i class="gap"></i><i class="gap"></i><i class="box"></i><i class="box"></i><i class="box"></i></div><svg class="whip"><use href="#whip"/></svg><select class="parent" aria-label="Parent 2"><option>None</option></select></div>
          <div class="row layer"><div class="av"><i class="box"><svg><use href="#eye"/></svg></i><i class="gap"></i><i class="box"></i><i class="box"></i></div><div class="lab"><svg class="tw"><use href="#twirldown"/></svg><i class="chip blue"></i></div><b class="num">3</b><div class="src"><svg><use href="#star"/></svg><b>Shape Layer 1</b></div><select class="mode" aria-label="Mode 3"><option>Normal</option></select><i class="box"></i><select class="trk" aria-label="Track matte 3"><option>None</option></select><div class="sw"><i class="box"><svg><use href="#shy"/></svg></i><i class="box faint"><svg><use href="#sun"/></svg></i><i class="box slash"><svg><use href="#slash"/></svg></i><i class="gap"></i><i class="gap"></i><i class="box"></i><i class="box"></i><i class="box"></i></div><svg class="whip"><use href="#whip"/></svg><select class="parent" aria-label="Parent 3"><option>None</option></select></div>
          <div class="row"><div class="av"></div><div class="name in2"><svg class="tw"><use href="#twirldown"/></svg>Contents</div><div class="val add">Add:<button aria-label="Add"><svg><use href="#add"/></svg></button></div></div>
          <div class="row"><div class="av"><i class="box"><svg><use href="#eye"/></svg></i></div><div class="name in3"><svg class="tw"><use href="#twirl"/></svg>Rectangle 1</div><div class="val"><select aria-label="Blend mode rectangle"><option>Normal</option></select></div></div>
        </div>
      </div>

      <div class="graph">
        <div class="navbar"><i class="hl"></i><i class="span"></i><i class="hr"></i><i class="rest"></i></div>
        <div class="ruler"><span>0:00s</span><span>01s</span><span>02s</span><span>03s</span><span>04s</span><span>05s</span><span>06s</span><span>07s</span><span>08s</span><span>09s</span></div>
        <div class="work"><i class="wh"></i><i class="wbar"></i></div>
        <div class="cache"></div>
        <div class="lanes rows">
          <div class="row"><svg><use href="#ibeam"/></svg></div>
          <div class="row"><svg><use href="#ibeam"/></svg></div>
          <div class="row"><svg><use href="#ibeam"/></svg></div>
          <div class="row keyrow"><svg class="key k0"><use href="#keyl"/></svg><svg class="key k1"><use href="#keyr"/></svg></div>
          <div class="row"><svg><use href="#ibeam"/></svg></div>
          <div class="row"><svg><use href="#ibeam"/></svg></div>
          <div class="row"></div>
          <div class="row"><svg><use href="#ibeam"/></svg></div>
          <div class="row barred"></div>
          <div class="row barblue"></div>
          <div class="row"><svg><use href="#ibeam"/></svg></div>
          <div class="row"><svg><use href="#ibeam"/></svg></div>
        </div>
        <div class="playhead"></div>
      </div>

      <div class="vstrip">
        <button class="mk" aria-label="Marker"><svg><use href="#marker"/></svg></button>
        <button class="cb" aria-label="Comp button"><svg><use href="#compbtn"/></svg></button>
        <div class="vtrack"><i></i></div>
      </div>
    </div>
    <div class="tlfoot">
      <div class="footl"><button class="on" aria-label="Layer switches"><svg><use href="#sw1"/></svg></button><button class="on" aria-label="Transfer controls"><svg><use href="#sw2"/></svg></button><button aria-label="In and out"><svg><use href="#sw3"/></svg></button></div>
      <svg class="hs"><use href="#hillS"/></svg><input type="range" aria-label="Timeline zoom" value="73"><svg class="hl2"><use href="#hillL"/></svg>
      <div class="htrack"><i></i></div>
    </div>
  </section>
</div>
</body>
</html>
```

FILE: styles.css
```css
:root {
  --panel: #262626;
  --text: #a9a9a9;
  --icon: #b4b4b4;
  --bright: #dcdcdc;
  --blue: #2d8ceb;
  --link: #34a0f2;
  --dark: #1b1b1b;
  --chev: url("data:image/svg+xml,%3Csvg xmlns='http://www.w3.org/2000/svg' width='10' height='6'%3E%3Cpath d='M0 0l5 5 5-5' fill='none' stroke='%23b8b8b8' stroke-width='1.500'/%3E%3C/svg%3E");
}
* { box-sizing: border-box; }
body {
  margin: 0;
  min-height: 100vh;
  padding: 2px 0;
  background: linear-gradient(#10103a, #14061c 60%, #3c0010);
  color: var(--text);
  font: 14px/20px "Noto Sans CJK SC", "Noto Sans", sans-serif;
  display: flex;
}
.defs { position: absolute; width: 0; height: 0; }
svg { display: block; flex: none; }
i, em { font-style: normal; }
button, input, select { font: inherit; color: inherit; margin: 0; padding: 0; border: 0; background: none; border-radius: 0; outline: 0; }
button { display: block; text-align: left; flex: none; }
a { color: var(--link); text-decoration: none; }
select {
  appearance: none;
  color: var(--bright);
  background: var(--dark) var(--chev) no-repeat right 5px center;
  padding-left: 8px;
}
.window {
  flex: 1;
  min-width: 0;
  display: flex;
  flex-direction: column;
  background: #151515;
  border-radius: 10px;
  overflow: hidden;
}

/* title bar */
.titlebar { height: 25px; background: #cbc8cc; display: flex; align-items: center; gap: 8px; padding-left: 5px; position: relative; border-bottom: 1px solid #e4e2e5; }
.light { width: 12px; height: 12px; border-radius: 6px; }
.light.red { background: radial-gradient(#5a0d0a 2px, #fe5f57 3px); }
.light.yellow { background: #febc2e; }
.light.green { background: #28c840; }
.titlebar h1 { position: absolute; inset: 0; margin: 0; text-align: center; font: 15px/24px Inter, sans-serif; color: #3b3a3c; }

/* tool bar */
.toolbar { height: 34px; border-bottom: 1px solid #111; margin-bottom: 1px; background: var(--panel); display: flex; color: var(--icon); }
.group { display: flex; align-items: center; padding: 0 3px; border-left: 1px solid #1b1b1b; flex: none; }
.group.first { border: 0; padding: 0; width: 52px; }
.grip { width: 4px; height: 26px; margin: 0 5px; background: repeating-linear-gradient(#111 0 1px, #303030 1px 3px); }
.tool { width: 34px; height: 30px; display: grid; place-items: center; position: relative; border-radius: 3px; }
.tool svg { width: 22px; height: 22px; }
.tool.on { background: #141414; color: #2d8ceb; width: 30px; margin: 0 2px; }
.tool.more::after { content: ""; position: absolute; right: 0; bottom: 2px; border: 3px solid; border-color: transparent currentColor currentColor transparent; }
.dim { color: #4c4c4c; }
.pins { width: 75px; }
.axes { color: #484848; padding: 0 12px 0 26px; }
.axes .tool { width: 30px; }
.axes .framed { color: #1d4678; border: 1px solid #1e2a36; }
.snaps { padding: 0 38px 0 9px; }
.snap { display: flex; align-items: center; gap: 4px; margin-right: 7px; }
.snap input {
  appearance: none; width: 19px; height: 19px; border-radius: 2px;
  background: #8c8c8c url("data:image/svg+xml,%3Csvg xmlns='http://www.w3.org/2000/svg' width='13' height='12'%3E%3Cpath d='M1 6l4 4 7-9' fill='none' stroke='%23222' stroke-width='2.500'/%3E%3C/svg%3E") center no-repeat;
}
.snaps .tool svg { width: 18px; height: 18px; }
.spaces { flex: 1; gap: 58px; padding-left: 29px; padding-top: 1px; }
.overflow { color: var(--icon); }
.i16 { width: 15px; height: 12px; }
.toolbar .overflow { padding-right: 12px; }
.help { padding: 0 6px 0 8px; gap: 16px; }
.wsicon { width: 26px; height: 16px; }
.helpbox { width: 259px; height: 25px; background: #141414; border: 1px solid #2f2f2f; border-radius: 3px; display: flex; align-items: center; padding-left: 7px; gap: 14px; color: #ddd; }
.helpbox input { flex: 1; min-width: 0; }
.lens { width: 16px; height: 17px; }

/* upper area */
.upper { flex: 1; display: flex; min-height: 0; }
.tab { display: flex; align-items: center; height: 36px; white-space: nowrap; }
.tab b { font-weight: 400; color: #bdbdbd; }
.tab.active { color: #e4e4e4; border-bottom: 3px solid #c8c8c8; padding-top: 3px; }
.menu { width: 12px; height: 12px; color: var(--icon); }
.swatch { width: 14px; height: 14px; flex: none; }
.swatch.blue { background: #6a7fe2; }
.swatch.tan { background: #ac9878; }
.x { width: 8px; height: 8px; fill: none; stroke: #999; stroke-width: 1; }
.project { width: 349px; flex: none; background: var(--panel); display: flex; flex-direction: column; }
.tabs { display: flex; padding: 0 6px 0 15px; height: 46px; }
.tabs .active { width: 71px; justify-content: space-between; }
.tabs .fx { margin-left: 48px; gap: 14px; width: 162px; border-right: 1px solid #1c1c1c; color: #8c8c8c; }
.clip { overflow: hidden; flex: 1; }
.tabs .overflow { margin-left: auto; height: 36px; }
.meta { display: flex; gap: 7px; padding-left: 8px; height: 140px; }
.thumb { width: 152px; height: 87px; background: #000; }
.facts { display: flex; flex-direction: column; font-size: 13px; line-height: 18px; white-space: nowrap; margin-top: -2px; }
.facts strong { font-weight: 500; font-size: 14px; }
.tri { display: inline-block; border: 5px solid transparent; border-top: 8px solid #eee; border-bottom: 0; margin-left: 3px; }
.searchbox { height: 26px; background: #161616; border: 1px solid #2e2e2e; border-radius: 3px; display: flex; align-items: center; padding-left: 8px; }
.searchbox input { flex: 1; min-width: 0; }
.lensdrop { width: 24px; height: 18px; }
.project .searchbox { margin: 0 9px 9px 8px; }
.colhead { height: 26px; border: 1px solid #0c0c0c; border-width: 1px 0; background: #303030; display: flex; align-items: center; justify-content: space-between; padding: 0 8px 0 21px; font-size: 12px; }
.colhead span { border-left: 2px solid #181818; padding-left: 6px; line-height: 18px; }
.sort { border: 8px solid transparent; border-bottom: 8px solid var(--blue); border-top: 0; margin-right: 8px; }
.item { height: 24px; display: flex; align-items: center; background: #303030; padding-left: 22px; }
.compicon { width: 22px; height: 17px; }
.itemname { flex: 1; background: #9f9f9f; color: #222; font-weight: 500; align-self: stretch; line-height: 24px; padding-left: 4px; }
.flow { width: 18px; height: 18px; margin: 0 4px 0 3px; color: var(--icon); }
.projbody { flex: 1; background: #232323; padding-right: 25px; }
.projbody div { height: 100%; background: var(--panel); }
.projfoot { height: 24px; border-top: 1px solid #0c0c0c; display: flex; align-items: center; padding-left: 5px; color: var(--icon); gap: 11px; background: #232323; }
.w24 { width: 24px; height: 17px; }
.w20 { width: 19px; height: 17px; }
.w18 { width: 17px; height: 17px; }
.bpc { width: 58px; height: 20px; background: var(--dark); border: 1px solid #2c2c2c; border-radius: 3px; text-align: center; font-size: 12px; line-height: 18px; }
.hscroll { width: 94px; background: #1d1d1d; height: 22px; }
.hscroll i { display: block; width: 52px; height: 20px; border-radius: 10px; background: #323232; }

/* composition viewer */
.comp { flex: 1; min-width: 0; margin: 0 7px 0 5px; border: 1px solid #2a80da; background: var(--panel); display: flex; flex-direction: column; }
.comptabs { display: flex; padding-left: 13px; height: 39px; }
.comptabs .active { padding-top: 1px; }
.comptabs .swatch { margin: 0 14px 0 12px; }
.unlock { width: 11px; height: 15px; color: var(--icon); }
.comptabs .active span + .menu { margin-left: 12px; }
.unlock + span { margin-left: 12px; }
.tab em { color: var(--link); }
.footage { margin-left: 48px; color: #8c8c8c; gap: 4px; }
.crumbs { height: 32px; border-bottom: 2px solid #0c0c0c; padding: 1px 0 0 25px; }
.crumbs button { width: 92px; height: 23px; line-height: 20px; padding-left: 11px; background: #151515; border: 1px solid #303030; border-radius: 3px; color: var(--link); }
.viewer { flex: 1; background: #222; display: grid; place-items: center; padding-top: 7px; }
.bounds { width: 54%; aspect-ratio: 684 / 407; border: 1px dashed #3d4590; display: grid; place-items: center; padding-bottom: 7px; }
.canvas { width: 94%; height: 90%; background: #282828; display: grid; place-items: center; }
.logo { width: 486px; height: 34px; overflow: visible; }
.logobox { fill: none; stroke: #46529c; stroke-width: 1; stroke-dasharray: 60 14; }
.logo text { font: 400 43px Inter, sans-serif; }
.ghost { fill: none; stroke: #46529c; stroke-width: 1; stroke-dasharray: 4 5; }
.stroke { fill: none; stroke: #f4f4fa; stroke-width: 2; stroke-dasharray: 75 45; }
.viewbar { height: 31px; border-top: 2px solid #0c0c0c; display: flex; align-items: center; padding: 0 8px 0 1px; color: var(--icon); white-space: nowrap; }
.vi { width: 29px; height: 24px; display: grid; place-items: center; border-radius: 2px; }
.vi svg { width: 19px; height: 18px; }
.vi.on { background: #141414; color: var(--blue); width: 27px; }
.vi.dark { background: #141414; width: 27px; margin: 0 2px; }
.vi.off { color: #444; }
.vi.sep { border-left: 1px solid #1c1c1c; margin-left: 5px; }
.viewbar select, .time { height: 24px; border: 1px solid #2e2e2e; border-radius: 3px; }
.time { width: 92px; background: var(--dark); text-align: center; margin: 0 2px 0 4px; }
.zoomsel { width: 92px; }
.ressel { width: 118px; margin-left: 2px; }
.camsel { width: 143px; margin-left: 2px; }
.viewsel { width: 95px; margin: 0 2px 0 4px; }
.expo { margin-left: 4px; }

/* side panels */
.side { width: 290px; flex: none; padding-right: 19px; background: #222; border-left: 1px solid #2b2b2b; }
.panel { width: 100%; height: 40px; border-bottom: 3px solid #151515; background: var(--panel); padding-left: 13px; line-height: 37px; }
.align { height: 178px; background: var(--panel); border-bottom: 3px solid #151515; }
.panel.head { display: flex; justify-content: space-between; align-items: center; border: 0; padding-right: 12px; color: #e4e4e4; height: 37px; }
.alignto { display: flex; align-items: center; justify-content: space-between; padding-left: 5px; height: 34px; }
.alignto select { width: 148px; height: 24px; background-color: #292929; background-blend-mode: multiply; color: #555; opacity: 1; }
.aicons { display: flex; justify-content: space-between; padding: 0 8px 0 11px; color: #3f3f3f; height: 30px; align-items: center; }
.aicons svg { width: 24px; height: 24px; }
.dist { border-top: 1px solid #303030; margin: 4px 6px 0 5px; padding-top: 2px; height: 23px; line-height: 20px; }

/* timeline */
.timeline { margin-top: 5px; background: var(--panel); flex: none; }
.tltab { height: 37px; display: flex; align-items: center; padding-left: 14px; color: var(--bright); }
.tltab .swatch { margin: 0 14px 0 12px; }
.tltab .menu { margin-left: 12px; }
.tlmain { display: flex; height: 333px; overflow: hidden; }
.layers { width: 986px; flex: none; border-right: 1px solid #0a0a0a; }
.tltools { height: 47px; display: flex; padding-left: 15px; }
.clock { width: 119px; text-align: center; padding-right: 15px; white-space: nowrap; padding-top: 4px; }
.clock a { display: block; font-size: 19px; line-height: 22px; font-weight: 700; }
.clock small { display: block; font-size: 13px; line-height: 18px; color: #1f6fae; }
.tltools .searchbox { width: 583px; margin-top: 9px; }
.tlicons { flex: 1; display: flex; justify-content: space-between; align-items: center; padding: 0 21px 0 20px; color: var(--icon); }
.trio { display: flex; gap: 14px; }
.tlicons svg { width: 22px; height: 21px; }
.lhead { height: 27px; border: solid #0a0a0a; border-width: 1px 0 2px; background: #313131; font-size: 12px; display: grid; grid-template-columns: 92px 42px 44px 173px 103px 25px 93px 183px 1fr; align-items: center; margin-right: 19px; box-shadow: 20px 0 #313131; }
.lhead > span { border-left: 2px solid #1a1a1a; height: 16px; line-height: 16px; padding-left: 6px; }
.lhead > .nobar { border-color: transparent; }
.lhead svg { width: 15px; height: 15px; color: var(--icon); }
.lhead .avh { border: 0; padding-left: 8px; display: flex; gap: 5px; align-items: center; }
.solo { width: 10px; height: 10px; border-radius: 5px; background: var(--icon); margin: 0 2px; }
.lhead .tagh { padding-left: 16px; }
.swh { display: flex; gap: 5px; align-items: center; }
.swh .fx { width: 15px; font: italic 17px/14px "Noto Sans", sans-serif; color: var(--icon); text-align: center; }
.rows { height: 259px; overflow: hidden; }
.row { height: 23px; border-bottom: 1px solid #1c1c1c; display: flex; align-items: center; }
.row:nth-child(3n+1) { height: 22px; }
.layer { background: #303030; }
.row b { font-weight: 500; }
.av { width: 93px; padding-left: 7px; display: flex; gap: 3px; flex: none; color: #ddd; }
.box, .gap { width: 17px; height: 18px; display: grid; place-items: center; flex: none; }
.box { background: #1f1f1f; }
.box svg { width: 14px; height: 11px; color: #ccc; }
.faint svg { color: #777; height: 13px; }
.sw .box svg { width: 16px; height: 14px; }
.sw .faint svg { color: #777; }
.name { width: 487px; flex: none; display: flex; align-items: center; }
.tw { width: 10px; height: 10px; color: #ccc; margin-right: 13px; }
.in2 { padding-left: 27px; }
.in3 { padding-left: 50px; }
.in4 { padding-left: 92px; }
.in5 { padding-left: 95px; }
.watch { width: 16px; height: 18px; margin-right: 8px; color: #bbb; }
.watch.on { color: var(--blue); }
.curve { width: 16px; height: 15px; margin-right: 9px; color: #bbb; }
.val { width: 170px; flex: none; display: flex; align-items: center; }
.row select { height: 20px; line-height: 18px; flex: none; }
.val select { width: 170px; border: 1px solid #2e2e2e; padding-left: 7px; }
.add { justify-content: flex-end; gap: 4px; }
.add svg { width: 16px; height: 16px; }
.link { padding-left: 30px; }
.link svg, .whip { width: 16px; height: 14px; color: var(--icon); }
.keys { gap: 13px; align-items: center; padding-left: 11px; }
.prev, .next { border: 5px solid transparent; }
.prev { border-right: 8px solid #bbb; border-left: 0; }
.next { border-left: 8px solid #bbb; border-right: 0; }
.dia { width: 8px; height: 8px; border: 1px solid #bbb; rotate: 45deg; }
.lab { width: 50px; display: flex; align-items: center; padding-left: 5px; }
.lab .tw { margin-right: 7px; }
.chip { width: 16px; height: 16px; flex: none; }
.chip.red { background: #b53636; }
.chip.blue { background: #6a7fe2; }
.num { width: 41px; }
.src { width: 172px; display: flex; align-items: center; gap: 9px; }
.src svg { width: 14px; height: 14px; color: #bbb; }
.mode { width: 92px; margin-right: 7px; }
.trk { width: 86px; margin: 0 12px 0 9px; }
.sw { display: flex; gap: 3px; width: 183px; }
.whip { margin-right: 9px; }
.parent { width: 171px; }

.graph { flex: 1; min-width: 0; position: relative; overflow: hidden; background: #232323; }
.navbar { height: 14px; margin: 6px 9px 0 0; display: flex; gap: 1px; background: #0c0c0c; padding: 1px 0; }
.hl, .hr { width: 8px; background: var(--blue); flex: none; }
.hl { border-radius: 7px 0 0 7px; }
.hr { border-radius: 0 7px 7px 0; }
.span { flex: 0 0 31.4%; background: linear-gradient(to right, transparent 17px, var(--blue) 17px 19px, transparent 19px) #666; }
.rest { flex: 1; background: #3f3a32; margin-left: -1px; }
.ruler { height: 26px; margin: 0 9px 0 -37px; display: grid; grid-template-columns: repeat(10, 1fr); text-align: center; font-size: 13px; line-height: 18px; }
.ruler span::after { content: ""; display: block; width: 2px; height: 7px; background: #999; margin: 1px auto 0; }
.work { height: 22px; border: solid #0a0a0a; border-width: 1px 0; display: flex; }
.wh { width: 8px; background: var(--blue); border-radius: 6px 0 0 6px; margin-right: 2px; }
.wbar { flex: 1; background: #606060; }
.cache { height: 6px; margin-left: 10px; background: #0cc81c; border-bottom: 2px solid #0a0a0a; }
.lanes .row { background: #333; margin-left: 10px; border-bottom-color: #202020; position: relative; }
.lanes svg { width: 10px; height: 16px; margin-left: 51px; }
.lanes .key { width: 12px; height: 12px; position: absolute; margin: 0; top: 5px; }
.k0 { left: -5px; }
.k1 { left: 92px; }
.lanes .keyrow { overflow: visible; }
.lanes .barred { background: #7a3a3a; }
.lanes .barblue { background: #535d90; }
.playhead { position: absolute; left: 65px; top: 27px; bottom: 0; width: 2px; background: var(--blue); }
.playhead::before { content: ""; position: absolute; left: -7px; top: 0; width: 16px; height: 17px; background: var(--blue); clip-path: polygon(0 0, 100% 0, 100% 55%, 60% 100%, 40% 100%, 0 55%); }
.vstrip { width: 25px; flex: none; padding: 48px 3px 0 0; display: flex; flex-direction: column; border-left: 1px solid #111; }
.mk { height: 26px; border-bottom: 2px solid #0a0a0a; padding-left: 4px; color: var(--icon); }
.mk svg { width: 15px; height: 19px; }
.cb { height: 22px; padding-top: 3px; color: var(--icon); }
.cb svg { width: 20px; height: 17px; }
.vtrack { flex: 1; background: #1c1c1c; padding-top: 138px; }
.vtrack i { display: block; height: 86px; border-radius: 10px; background: #333; }
.tlfoot { height: 23px; display: flex; align-items: center; color: var(--icon); border-top: 1px solid #0a0a0a; }
.footl { width: 993px; display: flex; gap: 8px; padding-left: 9px; }
.footl .on { color: var(--blue); }
.footl svg { width: 16px; height: 16px; }
.hs { width: 14px; height: 7px; }
.hl2 { width: 22px; height: 10px; }
.tlfoot input { appearance: none; width: 58px; height: 2px; background: #4a4a4a; margin: 0 16px 0 20px; }
.tlfoot input::-webkit-slider-thumb { appearance: none; width: 13px; height: 13px; border-radius: 7px; border: 2px solid #aaa; background: var(--panel); }
.htrack { flex: 1; height: 22px; background: #1c1c1c; margin: 0 24px 0 6px; }
.htrack i { display: block; width: 242px; height: 20px; border-radius: 10px; background: #333; }
```
